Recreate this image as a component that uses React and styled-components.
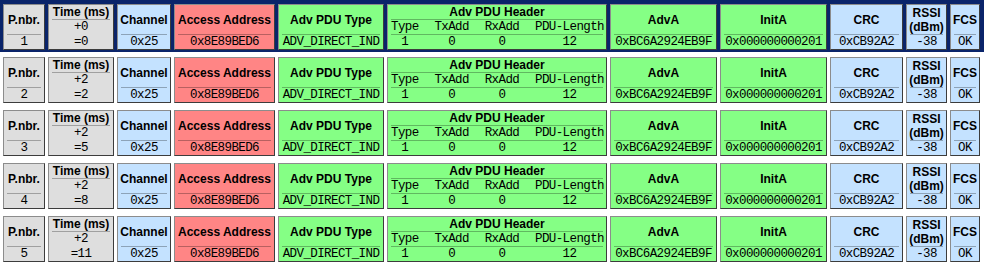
import styled, { createGlobalStyle } from 'styled-components'

const GlobalStyle = createGlobalStyle`
  body {
    margin:0;
    background:#fff;
  }
`

const tones = {
  grey: '#dedede',
  blue: '#c4e2ff',
  red: '#ff8585',
  green: '#85ff85'
}

// fixed advance of one mono character
const CHAR = 6.9

const List = styled.div`
  display:flex;
  flex-direction:column;
`
const Row = styled.div`
  display:flex;
  gap:3px;
  padding:4px 3px 2px;
  margin-bottom:1px;
  background:${p => (p.$selected ? '#0a246a' : '#fff')};
`
const Cell = styled.div`
  box-sizing:border-box;
  flex:none;
  width:${p => p.$w}px;
  height:46px;
  display:flex;
  flex-direction:column;
  background:${p => tones[p.$tone]};
  border:1px solid;
  border-color:#8c8c8c #3c3c3c #3c3c3c #8c8c8c;
`
const Title = styled.div`
  flex:1;
  display:flex;
  align-items:center;
  justify-content:center;
  text-align:center;
  font:bold 12px/14px 'Liberation Sans', Arial, sans-serif;
  color:#000;
`
const Caption = styled(Title)`
  flex:none;
  height:14px;
`
const Rule = styled.div`
  flex:none;
  height:1px;
  margin:0 3px;
  background:rgba(0,0,0,.28);
`
const mono = `
  font:12.5px/14px 'Liberation Mono', 'Courier New', monospace;
  letter-spacing:-0.6px;
  color:#000;
`
const Value = styled.div`
  ${mono}
  flex:none;
  height:${p => p.$h || 14}px;
  text-align:center;
  white-space:pre;
`
const Fields = styled.div`
  ${mono}
  flex:none;
  display:flex;
  justify-content:space-between;
  height:14px;
  padding:0 2px 0 3px;
`
const Field = styled.span`
  width:${p => p.$n * CHAR}px;
  text-align:center;
`

const headerFields = [
  { label: 'Type', value: '1' },
  { label: 'TxAdd', value: '0' },
  { label: 'RxAdd', value: '0' },
  { label: 'PDU-Length', value: '12' }
]

const packets = [
  { nbr: 1, delta: '+0', total: '=0' },
  { nbr: 2, delta: '+2', total: '=2' },
  { nbr: 3, delta: '+2', total: '=5' },
  { nbr: 4, delta: '+2', total: '=8' },
  { nbr: 5, delta: '+2', total: '=11' }
]

function Simple ({ w, tone, title, value }) {
  return (
    <Cell $w={w} $tone={tone}>
      <Title>{title}</Title>
      <Rule />
      <Value>{value}</Value>
    </Cell>
  )
}

function Packet ({ packet, selected }) {
  return (
    <Row $selected={selected}>
      <Simple w={42} tone='grey' title='P.nbr.' value={packet.nbr} />
      <Cell $w={66} $tone='grey'>
        <Caption>Time (ms)</Caption>
        <Rule />
        <Value $h={15}>{packet.delta}</Value>
        <Value>{packet.total}</Value>
      </Cell>
      <Simple w={54} tone='blue' title='Channel' value='0x25' />
      <Simple w={101} tone='red' title='Access Address' value='0x8E89BED6' />
      <Simple w={106} tone='green' title='Adv PDU Type' value='ADV_DIRECT_IND' />
      <Cell $w={220} $tone='green'>
        <Caption>Adv PDU Header</Caption>
        <Rule />
        <Fields>
          {headerFields.map(f => <Field key={f.label} $n={f.label.length}>{f.label}</Field>)}
        </Fields>
        <Rule />
        <Fields>
          {headerFields.map(f => <Field key={f.label} $n={f.label.length}>{f.value}</Field>)}
        </Fields>
      </Cell>
      <Simple w={107} tone='green' title='AdvA' value='0xBC6A2924EB9F' />
      <Simple w={107} tone='green' title='InitA' value='0x000000000201' />
      <Simple w={73} tone='blue' title='CRC' value='0xCB92A2' />
      <Simple w={41} tone='blue' title={<span>RSSI<br />(dBm)</span>} value='-38' />
      <Simple w={30} tone='blue' title='FCS' value='OK' />
    </Row>
  )
}

export default function App () {
  return (
    <>
      <GlobalStyle />
      <List>
        {packets.map((p, i) => <Packet key={p.nbr} packet={p} selected={i === 0} />)}
      </List>
    </>
  )
}
